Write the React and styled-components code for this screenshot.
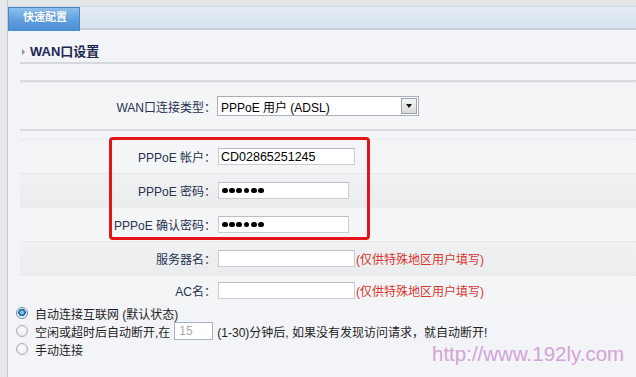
import React from "react";
import styled, { createGlobalStyle } from "styled-components";

const GlobalStyle = createGlobalStyle`
  html, body { margin: 0; padding: 0; }
  body {
    background: #f3f4f7;
    font-family: "Liberation Sans", "Noto Sans CJK SC", sans-serif;
    font-size: 12px;
  }
`;

const Page = styled.div`
  position: relative;
  width: 636px;
  height: 377px;
  overflow: hidden;
  display: flex;
  background: #f3f4f7;
`;

const LeftStrip = styled.div`
  flex: none;
  width: 7px;
  background: #e7e9ec;
  border-right: 1px solid #c2c9d2;
`;

const Main = styled.div`
  flex: 1;
  display: flex;
  flex-direction: column;
  min-width: 0;
`;

const TabBar = styled.div`
  flex: none;
  height: 30px;
  display: flex;
  align-items: flex-start;
  background: linear-gradient(
    #e4e6e9 0 6px,
    #d0d6dd 6px 7px,
    #e4ecf5 7px,
    #d8e3ee 28px,
    #c4ced9 28px 30px
  );
`;

const Tab = styled.div`
  position: relative;
  z-index: 1;
  margin-top: 7px;
  width: 72px;
  height: 24px;
  box-sizing: border-box;
  border: 1px solid #4a86c6;
  border-bottom: none;
  background: linear-gradient(#8cc0ee, #5e9edf 55%, #4d8fd6);
  color: #fff;
  font-weight: bold;
  font-size: 11px;
  line-height: 18px;
  padding-left: 14px;
  text-shadow: 0 0 1px rgba(30, 70, 130, 0.4);
`;

const Panel = styled.div`
  flex: 1;
  display: flex;
  flex-direction: column;
  background: #f3f4f7;
`;

const Content = styled.div`
  margin-left: 12px;
  display: flex;
  flex-direction: column;
`;

const Heading = styled.div`
  height: 34px;
  box-sizing: border-box;
  display: flex;
  align-items: flex-end;
  padding-bottom: 3px;
  border-bottom: 2px solid #d5d8dc;
  color: #1d2852;
  font-weight: bold;
  font-size: 13px;
  line-height: 15px;
  gap: 5px;
`;

const Arrow = styled.span`
  width: 0;
  height: 0;
  margin-left: 2px;
  margin-bottom: 4px;
  border-left: 3px solid #8a8f96;
  border-top: 3px solid transparent;
  border-bottom: 3px solid transparent;
`;

const Rule = styled.div`
  height: 2px;
  background: #d8dbdf;
  margin-top: ${(p) => p.$top || 0}px;
`;

const Row = styled.div`
  height: ${(p) => p.$h || 34}px;
  box-sizing: border-box;
  display: flex;
  align-items: center;
  border-top: 1px dotted #e1e3e6;
  background: ${(p) =>
    p.$shade ? "linear-gradient(#f0f1f3, #ebecee)" : "#f4f5f7"};
`;

const Label = styled.div`
  width: 196px;
  flex: none;
  text-align: right;
  color: #26324f;
  font-size: 12px;
  white-space: nowrap;
`;

const TextBox = styled.div`
  margin-left: 2px;
  width: ${(p) => p.$w}px;
  height: 17px;
  box-sizing: border-box;
  background: #fff;
  border: 1px solid #c9ced4;
  border-top-color: #b9bfc6;
  display: flex;
  align-items: center;
  padding-left: 2px;
  color: #000;
  font-size: 12.5px;
`;

const Dots = styled.div`
  display: flex;
  gap: 1.4px;
  padding-left: 1px;
`;

const Dot = styled.span`
  width: 5.8px;
  height: 5.8px;
  border-radius: 50%;
  background: #000;
`;

const Hint = styled.span`
  margin-left: 1px;
  color: #d8352f;
  font-size: 12px;
  white-space: nowrap;
`;

const SelectBox = styled.div`
  margin-left: 1px;
  width: 202px;
  height: 20px;
  box-sizing: border-box;
  border: 1px solid #a9b0b8;
  background: #fff;
  display: flex;
  align-items: center;
  justify-content: space-between;
  padding: 0 1px 0 3px;
  color: #000;
  font-size: 12px;
`;

const SelectButton = styled.span`
  width: 16px;
  height: 16px;
  box-sizing: border-box;
  border: 1px solid #9ca3ab;
  background: linear-gradient(#f4f4f4, #d9dadc);
  display: flex;
  align-items: center;
  justify-content: center;
`;

const Caret = styled.span`
  width: 0;
  height: 0;
  border-top: 4px solid #111;
  border-left: 3.5px solid transparent;
  border-right: 3.5px solid transparent;
`;

const Spacer = styled.div`
  height: ${(p) => p.$h}px;
`;

const RadioGroup = styled.div`
  margin-left: 8px;
  display: flex;
  flex-direction: column;
`;

const RadioLine = styled.div`
  height: 18px;
  display: flex;
  align-items: center;
  gap: 7px;
  color: #1f1f1f;
  font-size: 12px;
  white-space: nowrap;
`;

const Radio = styled.span`
  flex: none;
  width: 12px;
  height: 12px;
  box-sizing: border-box;
  border-radius: 50%;
  border: 1px solid ${(p) => (p.$on ? "#6d8fae" : "#a7aeb6")};
  background: ${(p) =>
    p.$on
      ? "radial-gradient(circle at 50% 45%, #7cc4ee 0 1.5px, #2a77b8 2.5px, #1d5d99 3.5px, #e9eef3 4px)"
      : "radial-gradient(circle at 50% 40%, #ffffff, #dfe2e6)"};
`;

const SmallBox = styled.span`
  width: 39px;
  height: 18px;
  box-sizing: border-box;
  border: 1px solid #aab2bb;
  background: #fff;
  color: #a8a8a8;
  font-size: 12px;
  line-height: 16px;
  padding-left: 4px;
  margin: 0 4px 0 4px;
`;

const Inline = styled.span`
  display: inline-flex;
  align-items: center;
`;

const Highlight = styled.div`
  position: absolute;
  left: 109px;
  top: 137px;
  width: 261px;
  height: 103px;
  box-sizing: border-box;
  border: 3px solid #e5141b;
  border-radius: 4px;
  pointer-events: none;
`;

const Watermark = styled.div`
  position: absolute;
  left: 432px;
  top: 342px;
  font-family: "Liberation Sans", Arial, sans-serif;
  font-size: 20.5px;
  color: #d2a4d6;
  white-space: nowrap;
`;

const PasswordDots = () => (
  <Dots>
    {Array.from({ length: 6 }).map((_, i) => (
      <Dot key={i} />
    ))}
  </Dots>
);

export default function App() {
  return (
    <>
      <GlobalStyle />
      <Page>
        <LeftStrip />
        <Main>
          <TabBar>
            <Tab>快速配置</Tab>
          </TabBar>
          <Panel>
            <Content>
              <Heading>
                <Arrow />
                WAN口设置
              </Heading>
              <Rule $top={16} />
              <Row $h={47}>
                <Label>WAN口连接类型：</Label>
                <SelectBox>
                  PPPoE 用户 (ADSL)
                  <SelectButton>
                    <Caret />
                  </SelectButton>
                </SelectBox>
              </Row>
              <Rule />
              <Spacer $h={8} />
              <Row>
                <Label>PPPoE 帐户：</Label>
                <TextBox $w={137}>CD02865251245</TextBox>
              </Row>
              <Row $shade>
                <Label>PPPoE 密码：</Label>
                <TextBox $w={131}>
                  <PasswordDots />
                </TextBox>
              </Row>
              <Row>
                <Label>PPPoE 确认密码：</Label>
                <TextBox $w={131}>
                  <PasswordDots />
                </TextBox>
              </Row>
              <Row $shade>
                <Label>服务器名：</Label>
                <TextBox $w={137} />
                <Hint>(仅供特殊地区用户填写)</Hint>
              </Row>
              <Row $h={29}>
                <Label>AC名：</Label>
                <TextBox $w={137} />
                <Hint>(仅供特殊地区用户填写)</Hint>
              </Row>
            </Content>
            <RadioGroup>
              <RadioLine>
                <Radio $on />
                自动连接互联网 (默认状态)
              </RadioLine>
              <RadioLine>
                <Radio />
                <Inline>
                  空闲或超时后自动断开,在
                  <SmallBox>15</SmallBox>
                  (1-30)分钟后, 如果没有发现访问请求，就自动断开!
                </Inline>
              </RadioLine>
              <RadioLine>
                <Radio />
                手动连接
              </RadioLine>
            </RadioGroup>
          </Panel>
        </Main>
        <Highlight />
        <Watermark>http://www.192ly.com</Watermark>
      </Page>
    </>
  );
}
